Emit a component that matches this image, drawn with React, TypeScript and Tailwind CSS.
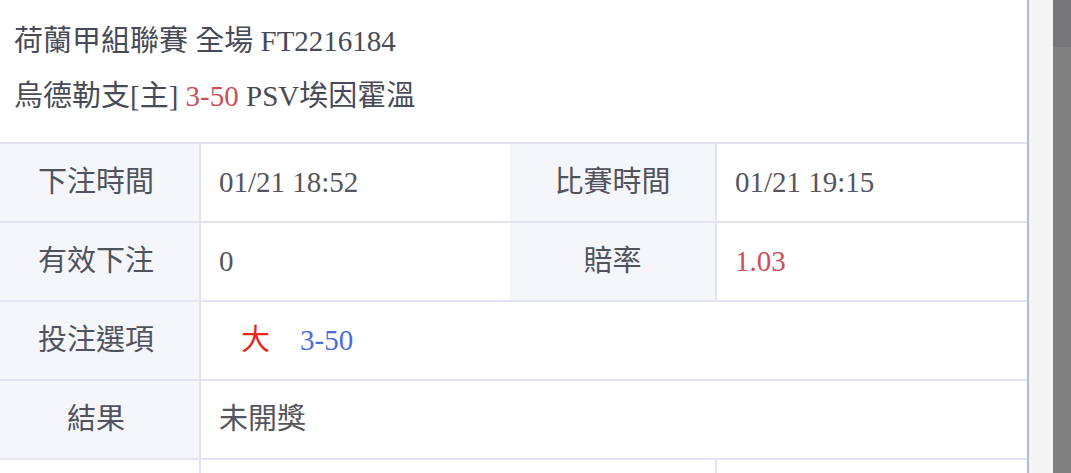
import React from 'react'

const FONT = "font-['Liberation_Serif','Noto_Sans_CJK_TC',serif]"

function Row({
  label,
  value,
  label2,
  value2,
  plain,
}: {
  label?: React.ReactNode
  value?: React.ReactNode
  label2?: React.ReactNode
  value2?: React.ReactNode
  plain?: boolean
}) {
  const full = label2 === undefined && !plain
  return (
    <div className="flex h-[79px] shrink-0 border-t-2 border-[#e2e4f2]">
      <div
        className={`flex w-[201px] shrink-0 items-center justify-center border-r-2 border-[#e2e4f2] pr-[7px] text-[#50535e] ${plain ? 'bg-white' : 'bg-[#f5f6fa]'}`}
      >
        {label}
      </div>
      {full ? (
        <div className="flex flex-1 items-center pl-[18px] text-[#555560]">{value}</div>
      ) : (
        <>
          <div className="flex w-[309px] shrink-0 items-center pl-[18px] text-[#555560]">{value}</div>
          <div
            className={`flex w-[207px] shrink-0 items-center justify-center border-r-2 border-[#e2e4f2] text-[#50535e] ${plain ? 'bg-white' : 'bg-[#f5f6fa]'}`}
          >
            {label2}
          </div>
          <div className="flex flex-1 items-center pl-[18px] text-[#555560]">{value2}</div>
        </>
      )}
    </div>
  )
}

export default function App() {
  return (
    <div className={`flex h-[473px] w-[1071px] overflow-hidden bg-white text-[29px] ${FONT}`}>
      {/* Panel */}
      <div className="flex w-[1029px] shrink-0 flex-col border-r-2 border-[#b4b7dc] bg-white">
        <div className="px-[14px] pt-[14px] pb-[18px] leading-[55px] text-[#474a57]">
          <div>荷蘭甲組聯賽 全場 FT2216184</div>
          <div>
            烏德勒支[主] <span className="text-[#cc4f5c]">3-50</span> PSV埃因霍溫
          </div>
        </div>

        <Row label="下注時間" value="01/21 18:52" label2="比賽時間" value2="01/21 19:15" />
        <Row
          label="有效下注"
          value="0"
          label2="賠率"
          value2={<span className="text-[#cc4f5c]">1.03</span>}
        />
        <Row
          label="投注選項"
          value={
            <span className="flex items-center pl-[22px]">
              <span className="text-[#e6271f]">大</span>
              <span className="ml-[30px] text-[#4a6de0]">3-50</span>
            </span>
          }
        />
        <Row label="結果" value="未開獎" />
        <Row plain />
      </div>

      {/* Gutter + scrollbar */}
      <div className="w-[24px] shrink-0 bg-[#f5f5f5]" />
      <div className="flex flex-1 flex-col bg-[#808080]">
        <div className="h-[47px] bg-[#76767c]" />
      </div>
    </div>
  )
}
